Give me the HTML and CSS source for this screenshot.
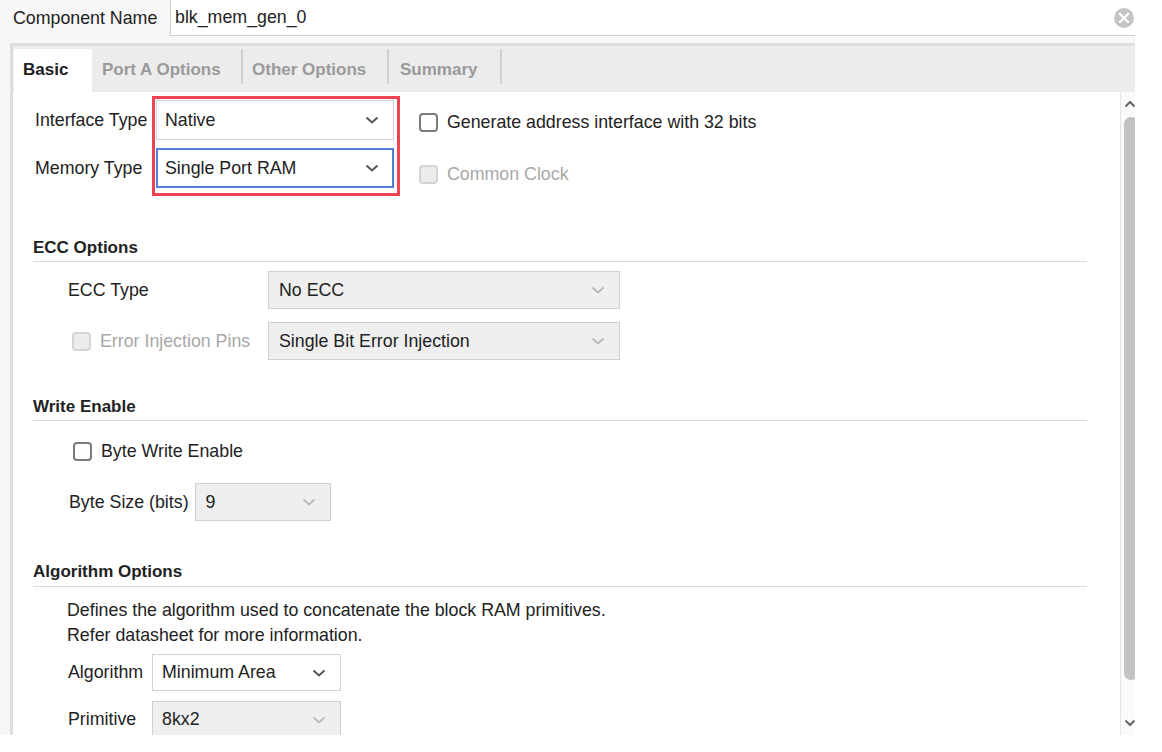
FILE: index.html
```html
<!DOCTYPE html>
<html lang="en">
<head>
  <meta charset="UTF-8" />
  <title>Block Memory Generator</title>
  <link rel="stylesheet" href="styles.css">
</head>
<body>

<div class="app">

  <div class="name-row">
    <span class="name-label">Component Name</span>
    <div class="name-input">
      <span>blk_mem_gen_0</span>
      <svg class="clear" width="20" height="20" viewBox="0 0 20 20">
        <circle cx="10" cy="10" r="10" fill="#c4c4c4"/>
        <path d="M6 6 L14 14 M14 6 L6 14" stroke="#fff" stroke-width="2.4" stroke-linecap="round"/>
      </svg>
    </div>
  </div>

  <div class="panel">
    <div class="tabs">
      <div class="tab active">Basic</div>
      <div class="tab port">Port A Options</div>
      <div class="tab other">Other Options</div>
      <div class="tab summary">Summary</div>
    </div>

    <div class="tab-body">
      <div class="content">

        <!-- interface / memory type -->
        <div class="top">
          <div class="top-labels">
            <div class="top-label">Interface Type</div>
            <div class="top-label">Memory Type</div>
          </div>
          <div class="highlight">
            <div class="select">
              <span>Native</span>
              <svg class="chev" width="14" height="8" viewBox="0 0 14 8"><path d="M1.5 1.5 L7 6.5 L12.5 1.5" fill="none" stroke="#555" stroke-width="2"/></svg>
            </div>
            <div class="select focused">
              <span>Single Port RAM</span>
              <svg class="chev" width="14" height="8" viewBox="0 0 14 8"><path d="M1.5 1.5 L7 6.5 L12.5 1.5" fill="none" stroke="#555" stroke-width="2"/></svg>
            </div>
          </div>
          <div class="top-checks">
            <label class="check"><span class="box"></span>Generate address interface with 32 bits</label>
            <label class="check disabled"><span class="box"></span>Common Clock</label>
          </div>
        </div>

        <!-- ECC -->
        <div class="section-title ecc-title">ECC Options</div>
        <div class="ecc-grid">
          <div class="row-label">ECC Type</div>
          <div class="select disabled tall">
            <span>No ECC</span>
            <svg class="chev" width="14" height="8" viewBox="0 0 14 8"><path d="M1.5 1.5 L7 6.5 L12.5 1.5" fill="none" stroke="#bbb" stroke-width="2"/></svg>
          </div>
          <label class="check disabled inj"><span class="box"></span>Error Injection Pins</label>
          <div class="select disabled tall">
            <span>Single Bit Error Injection</span>
            <svg class="chev" width="14" height="8" viewBox="0 0 14 8"><path d="M1.5 1.5 L7 6.5 L12.5 1.5" fill="none" stroke="#bbb" stroke-width="2"/></svg>
          </div>
        </div>

        <!-- write enable -->
        <div class="section-title we-title">Write Enable</div>
        <label class="check byte-we"><span class="box"></span>Byte Write Enable</label>
        <div class="byte-size">
          <span>Byte Size (bits)</span>
          <div class="select disabled tall small">
            <span>9</span>
            <svg class="chev" width="14" height="8" viewBox="0 0 14 8"><path d="M1.5 1.5 L7 6.5 L12.5 1.5" fill="none" stroke="#bbb" stroke-width="2"/></svg>
          </div>
        </div>

        <!-- algorithm -->
        <div class="section-title algo-title">Algorithm Options</div>
        <p class="desc">Defines the algorithm used to concatenate the block RAM primitives.<br>Refer datasheet for more information.</p>
        <div class="algo-grid">
          <div class="row-label">Algorithm</div>
          <div class="select algo">
            <span>Minimum Area</span>
            <svg class="chev" width="14" height="8" viewBox="0 0 14 8"><path d="M1.5 1.5 L7 6.5 L12.5 1.5" fill="none" stroke="#555" stroke-width="2"/></svg>
          </div>
          <div class="row-label">Primitive</div>
          <div class="select disabled algo">
            <span>8kx2</span>
            <svg class="chev" width="14" height="8" viewBox="0 0 14 8"><path d="M1.5 1.5 L7 6.5 L12.5 1.5" fill="none" stroke="#bbb" stroke-width="2"/></svg>
          </div>
        </div>

      </div>

      <div class="scrollbar">
        <svg class="arrow" width="12" height="8" viewBox="0 0 12 8"><path d="M1.5 6.5 L6 2 L10.5 6.5" fill="none" stroke="#666" stroke-width="2"/></svg>
        <div class="thumb"></div>
        <svg class="arrow down" width="12" height="8" viewBox="0 0 12 8"><path d="M1.5 1.5 L6 6 L10.5 1.5" fill="none" stroke="#666" stroke-width="2"/></svg>
      </div>
    </div>
  </div>

</div>

</body>
</html>
```

FILE: styles.css
```css
body {
  margin: 0;
  background: #fff;
  font-family: 'Liberation Sans', Arial, sans-serif;
  font-size: 17.8px;
  color: #222;
}

.app {
  width: 1135px;
  height: 735px;
  background: #f7f7f7;
  overflow: hidden;
}

/* component name row */
.name-row {
  width: 1140px;
  height: 36px;
  display: flex;
  align-items: stretch;
}

.name-label {
  width: 157px;
  padding-left: 13px;
  display: flex;
  align-items: center;
}

.name-input {
  flex: 1;
  display: flex;
  align-items: center;
  justify-content: space-between;
  background: #fff;
  border: 1px solid #cfcfcf;
  border-top: none;
  padding: 0 5px 0 4px;
}

.clear {
  display: block;
}

/* tabbed panel */
.panel {
  width: 1127px;
  height: 689px;
  margin: 7px 0 0 10px;
  border: 3px solid #dedede;
  border-right: none;
  display: flex;
  flex-direction: column;
}

.tabs {
  height: 46px;
  background: #ececec;
  display: flex;
  padding: 3px 0 0 1px;
  box-sizing: border-box;
}

.tab {
  position: relative;
  box-sizing: border-box;
  padding: 0 0 2px 10px;
  font-weight: bold;
  font-size: 17px;
  color: #9a9a9a;
  display: flex;
  align-items: center;
  white-space: nowrap;
}

.tab.active {
  width: 78px;
  background: #fff;
  color: #1e1e1e;
  padding-left: 9px;
}

.tab.port {
  width: 151px;
}

.tab.other {
  width: 146px;
  padding-left: 9px;
}

.tab.summary {
  width: 113px;
  padding-left: 11px;
}

.tab:not(.active)::after {
  content: "";
  position: absolute;
  right: 0;
  top: 0;
  width: 2px;
  height: 35px;
  background: #d0d0d0;
}

.tab-body {
  flex: 1;
  display: flex;
  background: #fff;
  overflow: hidden;
}

.content {
  width: 1107px;
  flex-shrink: 0;
  box-sizing: border-box;
  padding: 0 33px 0 20px;
  overflow: hidden;
}

/* scrollbar */
.scrollbar {
  width: 20px;
  flex-shrink: 0;
  box-sizing: border-box;
  border-left: 1px solid #e4e4e4;
  background: #fafafa;
  display: flex;
  flex-direction: column;
  padding-left: 3px;
}

.arrow {
  display: block;
  margin: 8px 0 0 0;
}

.thumb {
  width: 14px;
  height: 563px;
  margin-top: 9px;
  background: #c2c2c2;
  border-radius: 7px;
}

.arrow.down {
  margin-top: 39px;
}

/* selects */
.select {
  box-sizing: border-box;
  height: 40px;
  display: flex;
  align-items: center;
  justify-content: space-between;
  padding: 0 14px 0 8px;
  border: 1px solid #d2d2d2;
  background: #fff;
}

.select.focused {
  border: 2px solid #4d7fd6;
  padding-left: 7px;
  padding-right: 13px;
}

.select.disabled {
  background: #efefef;
  border-color: #d0d0d0;
}

.select.tall {
  height: 38px;
  padding-left: 10px;
}

.chev {
  display: block;
}

/* checkboxes */
.check {
  display: flex;
  align-items: center;
  gap: 9px;
}

.check .box {
  width: 19px;
  height: 19px;
  box-sizing: border-box;
  border: 2px solid #7a7a7a;
  border-radius: 4px;
  background: #fff;
}

.check.disabled {
  color: #a8a8a8;
}

.check.disabled .box {
  border-color: #d4d4d4;
  background: #ececec;
}

/* top block */
.top {
  display: flex;
  margin-top: 4px;
  padding-left: 2px;
}

.top-labels {
  width: 117px;
  padding-top: 4px;
}

.top-label {
  height: 40px;
  line-height: 40px;
  margin-bottom: 8px;
}

.highlight {
  border: 3px solid #f04352;
  padding: 1px 3px 3px 1px;
  width: 238px;
  display: flex;
  flex-direction: column;
  gap: 8px;
}

.top-checks {
  margin-left: 19px;
  padding-top: 12px;
  display: flex;
  flex-direction: column;
  gap: 23px;
}

.top-checks .check {
  height: 29px;
}

/* sections */
.section-title {
  font-weight: bold;
  font-size: 17px;
  line-height: 22px;
  padding-bottom: 2px;
  border-bottom: 1px solid #d8d8d8;
}

.ecc-title {
  margin-top: 41px;
}

.ecc-grid {
  display: grid;
  grid-template-columns: 200px 352px;
  row-gap: 13px;
  margin-top: 9px;
  padding-left: 35px;
  align-items: center;
}

.we-title {
  margin-top: 36px;
}

.algo-title {
  margin-top: 40px;
  padding-bottom: 3px;
}

.row-label {
  white-space: nowrap;
}

.check.inj {
  padding-left: 4px;
}

.byte-we {
  height: 30px;
  margin: 15px 0 0 40px;
}

.byte-size {
  display: flex;
  align-items: center;
  gap: 6px;
  margin: 17px 0 0 36px;
}

.select.small {
  width: 136px;
}

.desc {
  margin: 11px 0 0 34px;
  line-height: 25px;
}

.algo-grid {
  display: grid;
  grid-template-columns: 84px 189px;
  row-gap: 10px;
  margin-top: 6px;
  padding-left: 35px;
  align-items: center;
}

.select.algo {
  height: 37px;
  padding-left: 9px;
}
```
